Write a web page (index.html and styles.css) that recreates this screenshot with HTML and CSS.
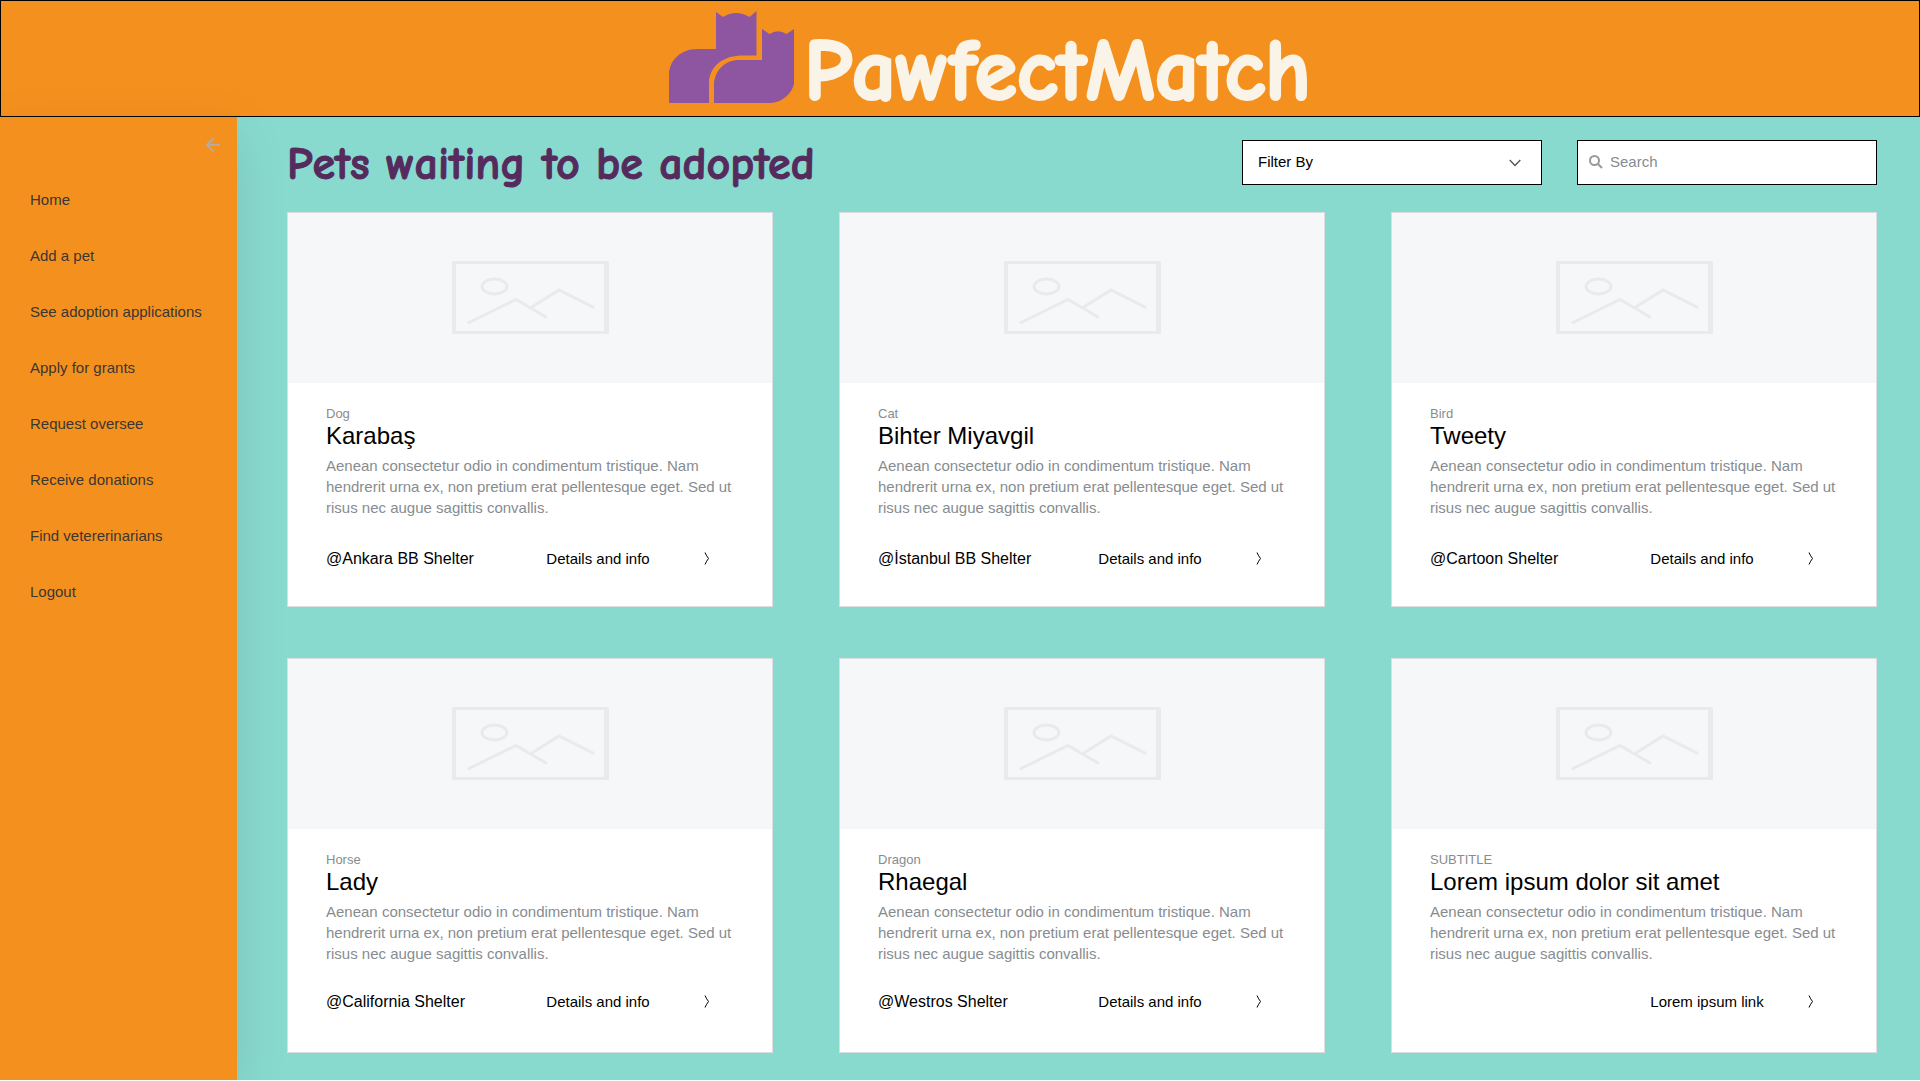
FILE: index.html
```html
<!DOCTYPE html>
<html lang="en">
<head>
<meta charset="utf-8">
<meta name="viewport" content="width=device-width, initial-scale=1">
<title>PawfectMatch</title>
<link rel="stylesheet" href="styles.css">
</head>
<body>
<svg class="sprite" aria-hidden="true">
  <symbol id="picture" viewBox="0 0 157 73">
    <path fill="currentColor" fill-rule="evenodd" d="M1 0H156L157 1V72L156 73H1L0 72V1ZM4 3V70H152V3Z"/>
    <g fill="none" stroke="currentColor" stroke-width="3" stroke-linecap="round">
      <ellipse cx="42.5" cy="25.5" rx="12.5" ry="7.5"/>
      <path d="M17 61.500L64 38.500L94 56M79 46.500L107 29L141 46"/>
    </g>
  </symbol>
  <symbol id="next" viewBox="0 0 6 13">
    <path fill="none" stroke="currentColor" d="M1 .5Q2.500 4 4.500 6.500Q2.500 9 1 12.500"/>
  </symbol>
</svg>

<header class="banner">
  <svg class="logo" viewBox="0 0 125 92" role="img" aria-label="Two cats">
    <path d="M47 1L54 6Q67 -2 80.500 6L87.500 0V44.500H72C54 45 41 55 40 71V92H0V62C1 49 12 38 28 38H47Z"/>
    <path d="M93 18L100.500 23Q109 17.500 117.500 23L125 18V73C123 82 114 91 102 92H45V73C46 59 56 49 70 49H93Z"/>
  </svg>
  <span class="wordmark">PawfectMatch</span>
</header>

<div class="layout">
  <aside class="sidebar">
    <button class="collapse" type="button" aria-label="Collapse menu">
      <svg width="14" height="14" viewBox="0 0 14 14" fill="none" stroke="currentColor" stroke-width="2"><path d="M7.500 .5L1 7L7.500 13.500M1 7H14"/></svg>
    </button>
    <nav class="menu">
      <a href="#">Home</a>
      <a href="#">Add a pet</a>
      <a href="#">See adoption applications</a>
      <a href="#">Apply for grants</a>
      <a href="#">Request oversee</a>
      <a href="#">Receive donations</a>
      <a href="#">Find vetererinarians</a>
      <a href="#">Logout</a>
    </nav>
  </aside>

  <main class="content">
    <div class="toolbar">
      <h1>Pets waiting to be adopted</h1>
      <div class="field">
        <select class="filter" aria-label="Filter By"><option>Filter By</option></select>
        <svg class="arrow" width="12" height="8" viewBox="0 0 12 8" fill="none" stroke="currentColor" stroke-width="1.300"><path d="M.7 1L6 6.500L11.300 1"/></svg>
      </div>
      <label class="field search">
        <svg width="14" height="14" viewBox="0 0 14 14" fill="none" stroke="currentColor" stroke-width="2"><ellipse cx="5.500" cy="5.500" rx="4.500" ry="4.500"/><path d="M8.500 8.500L13 13"/></svg>
        <input type="text" placeholder="Search" aria-label="Search">
      </label>
    </div>

    <div class="cards">
      <article class="card">
        <div class="photo"><svg><use href="#picture"/></svg></div>
        <div class="body">
          <p class="kind">Dog</p>
          <h2>Karabaş</h2>
          <p class="about">Aenean consectetur odio in condimentum tristique. Nam hendrerit urna ex, non pretium erat pellentesque eget. Sed ut risus nec augue sagittis convallis.</p>
          <div class="foot"><span class="shelter">@Ankara BB Shelter</span><a href="#">Details and info <svg><use href="#next"/></svg></a></div>
        </div>
      </article>
      <article class="card">
        <div class="photo"><svg><use href="#picture"/></svg></div>
        <div class="body">
          <p class="kind">Cat</p>
          <h2>Bihter Miyavgil</h2>
          <p class="about">Aenean consectetur odio in condimentum tristique. Nam hendrerit urna ex, non pretium erat pellentesque eget. Sed ut risus nec augue sagittis convallis.</p>
          <div class="foot"><span class="shelter">@İstanbul BB Shelter</span><a href="#">Details and info <svg><use href="#next"/></svg></a></div>
        </div>
      </article>
      <article class="card">
        <div class="photo"><svg><use href="#picture"/></svg></div>
        <div class="body">
          <p class="kind">Bird</p>
          <h2>Tweety</h2>
          <p class="about">Aenean consectetur odio in condimentum tristique. Nam hendrerit urna ex, non pretium erat pellentesque eget. Sed ut risus nec augue sagittis convallis.</p>
          <div class="foot"><span class="shelter">@Cartoon Shelter</span><a href="#">Details and info <svg><use href="#next"/></svg></a></div>
        </div>
      </article>
      <article class="card compact">
        <div class="photo"><svg><use href="#picture"/></svg></div>
        <div class="body">
          <p class="kind">Horse</p>
          <h2>Lady</h2>
          <p class="about">Aenean consectetur odio in condimentum tristique. Nam hendrerit urna ex, non pretium erat pellentesque eget. Sed ut risus nec augue sagittis convallis.</p>
          <div class="foot"><span class="shelter">@California Shelter</span><a href="#">Details and info <svg><use href="#next"/></svg></a></div>
        </div>
      </article>
      <article class="card compact">
        <div class="photo"><svg><use href="#picture"/></svg></div>
        <div class="body">
          <p class="kind">Dragon</p>
          <h2>Rhaegal</h2>
          <p class="about">Aenean consectetur odio in condimentum tristique. Nam hendrerit urna ex, non pretium erat pellentesque eget. Sed ut risus nec augue sagittis convallis.</p>
          <div class="foot"><span class="shelter">@Westros Shelter</span><a href="#">Details and info <svg><use href="#next"/></svg></a></div>
        </div>
      </article>
      <article class="card compact">
        <div class="photo"><svg><use href="#picture"/></svg></div>
        <div class="body">
          <p class="kind">SUBTITLE</p>
          <h2>Lorem ipsum dolor sit amet</h2>
          <p class="about">Aenean consectetur odio in condimentum tristique. Nam hendrerit urna ex, non pretium erat pellentesque eget. Sed ut risus nec augue sagittis convallis.</p>
          <div class="foot"><span class="shelter"></span><a href="#">Lorem ipsum link <svg><use href="#next"/></svg></a></div>
        </div>
      </article>
    </div>
  </main>
</div>
</body>
</html>
```
FILE: styles.css
```css
* { box-sizing: border-box; }

html { background: #fff; }

body {
  margin: 0;
  min-height: calc(100vh - 1px);
  display: flex;
  flex-direction: column;
  background: #88dacf;
  color: #000;
  font: 15px/21px "Liberation Sans", Arial, sans-serif;
}

h1, h2, p { margin: 0; }
a { color: inherit; text-decoration: none; }
svg { flex: none; display: block; }
.sprite { position: absolute; width: 0; height: 0; }

.banner {
  display: flex;
  justify-content: center;
  align-items: center;
  gap: 10px;
  padding: 10px 0 13px 60px;
  border: 1px solid #000;
  background: #f4911e;
}
.logo { width: 125px; height: 92px; fill: #8e56a0; }
.wordmark {
  padding-top: 30px;
  color: #faf4e8;
  font: 900 86px/62px "Comic Neue", "Comic Sans MS", Lato, sans-serif;
  -webkit-text-stroke: 3px #faf4e8;
}

.layout { flex: 1; display: flex; }

.sidebar {
  flex: none;
  width: 237px;
  padding: 21px 17px 0 30px;
  background: #f4911e;
  box-shadow: 0 16px 50px rgba(0, 0, 0, .1);
}
.collapse {
  display: block;
  margin: 0 0 20px auto;
  padding: 0;
  border: 0;
  background: none;
  color: #b5aaa0;
  cursor: pointer;
}
.menu { display: grid; color: #3b3632; line-height: 56px; }

.content { flex: 1; min-width: 0; padding: 23px 43px 27px 50px; }

.toolbar {
  display: flex;
  align-items: center;
  gap: 35px;
  margin-bottom: 27px;
}
h1 {
  flex: 1;
  padding-top: 5px;
  color: #552a5c;
  font: 900 46px/40px "Comic Neue", "Comic Sans MS", Lato, sans-serif;
  -webkit-text-stroke: 1px #552a5c;
}
.field {
  position: relative;
  width: 300px;
  height: 45px;
  border: 1px solid #000;
  background: #fff;
}
.filter {
  appearance: none;
  width: 100%;
  height: 100%;
  padding: 0 15px 2px;
  border: 0;
  background: none;
  color: #000;
  font: inherit;
}
.arrow { position: absolute; right: 20px; top: 18px; color: #555; pointer-events: none; }
.search {
  display: flex;
  align-items: center;
  gap: 7px;
  padding: 0 11px 2px;
  color: #999;
}
.search input {
  flex: 1;
  min-width: 0;
  padding: 0;
  border: 0;
  outline: 0;
  background: none;
  font: inherit;
}
.search input::placeholder { color: #878c90; opacity: 1; }

.cards {
  display: grid;
  grid-template-columns: repeat(3, 1fr);
  gap: 51px 66px;
}
.card { border: 1px solid #dcdddf; background: #fff; }
.photo {
  display: grid;
  place-items: center;
  height: 170px;
  padding-bottom: 2px;
  background: #f6f7f9;
  color: #e9eaec;
}
.photo svg { width: 157px; height: 73px; }

.body { padding: 23px 38px 37px; }
.kind { color: #878c90; font-size: 13px; line-height: 16px; }
h2 { font-size: 24px; font-weight: 400; line-height: 28px; }
.about { padding-top: 5px; color: #878c90; }
.foot {
  display: grid;
  grid-template-columns: 54% 1fr;
  align-items: center;
  padding-top: 30px;
}
.compact .foot { padding: 27px 0 3px; }
.shelter { font-size: 16px; }
.foot a {
  display: flex;
  justify-content: space-between;
  align-items: center;
  padding-right: 24px;
}
.foot svg { width: 6px; height: 13px; }
```
